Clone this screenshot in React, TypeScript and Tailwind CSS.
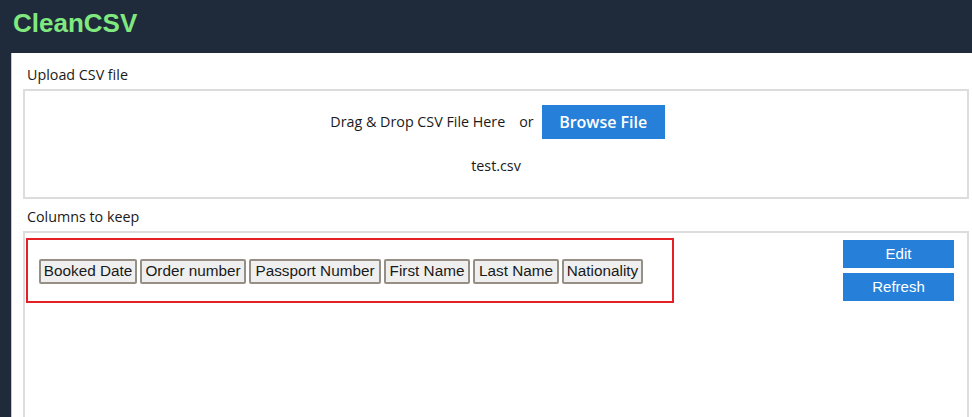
import React from "react";

const cols: { label: string; w: string }[] = [
  { label: "Booked Date", w: "w-[98px]" },
  { label: "Order number", w: "w-[106px]" },
  { label: "Passport Number", w: "w-[132px]" },
  { label: "First Name", w: "w-[86px]" },
  { label: "Last Name", w: "w-[86px]" },
  { label: "Nationality", w: "w-[81px]" },
];

export default function App() {
  return (
    <div className="w-[972px] h-[417px] overflow-hidden bg-[#1f2a3a] flex flex-col">
      <div className="h-[53px] shrink-0 pl-[13px] pt-[7px]">
        <span className="text-[26px] text-[#7fe87f] font-bold leading-[32px]" style={{ fontFamily: '"Liberation Sans", Arial, sans-serif' }}>CleanCSV</span>
      </div>
      <div className="ml-[11px] flex-1 bg-white border-l border-[#c8c8c8] pl-[11px] pr-[3px] pt-[12px]" style={{ fontFamily: '"Open Sans", sans-serif' }}>
        <div className="text-[14.3px] leading-[20px] text-[#1a1a1a] pl-[4px]">Upload CSV file</div>
        <div className="mt-[4px] h-[110px] border-2 border-[#dcdcdc] flex flex-col items-center pt-[14px]">
          <div className="flex items-center pl-[3px]">
            <span className="text-[14.3px] text-[#1a1a1a]">Drag &amp; Drop CSV File Here</span>
            <span className="text-[14.3px] text-[#1a1a1a] ml-[14px]">or</span>
            <button className="ml-[8px] w-[123px] h-[34px] bg-[#2680d9] text-white text-[16px] font-semibold">Browse File</button>
          </div>
          <div className="mt-[16px] text-[14.3px] text-[#1a1a1a]">test.csv</div>
        </div>
        <div className="mt-[8px] text-[14.3px] leading-[20px] text-[#1a1a1a] pl-[4px]">Columns to keep</div>
        <div className="mt-[4px] h-[200px] border-2 border-b-0 border-[#dcdcdc] flex items-start pl-[1px] pt-[5px]">
          <div className="w-[648px] h-[65px] border-2 border-[#e32026] flex items-center pl-[11px] gap-[3px] pt-[1px]">
            {cols.map((c) => (
              <div key={c.label} className={`${c.w} h-[25px] border-2 border-[#958f86] rounded-[2px] bg-[#efefef] flex items-center justify-center whitespace-nowrap text-[15.3px] text-[#1a1a1a]`} style={{ fontFamily: '"Liberation Sans", Arial, sans-serif' }}>{c.label}</div>
            ))}
          </div>
          <div className="ml-auto mr-[13px] mt-[2px] flex flex-col gap-[5px]">
            <button className="w-[111px] h-[28px] bg-[#2680d9] text-white text-[15px]" style={{ fontFamily: '"Liberation Sans", Arial, sans-serif' }}>Edit</button>
            <button className="w-[111px] h-[28px] bg-[#2680d9] text-white text-[15px]" style={{ fontFamily: '"Liberation Sans", Arial, sans-serif' }}>Refresh</button>
          </div>
        </div>
      </div>
    </div>
  );
}
